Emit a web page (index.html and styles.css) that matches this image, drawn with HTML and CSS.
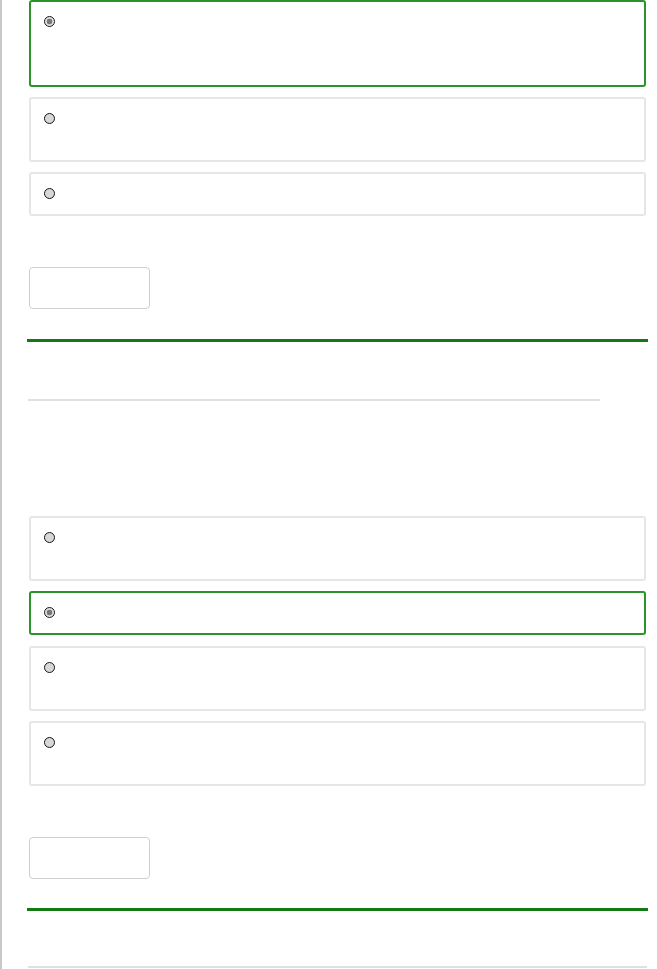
FILE: index.html
```html
<!DOCTYPE html>
<html lang="en">
<head>
<meta charset="utf-8">
<title>Quiz</title>
<link rel="stylesheet" href="styles.css">
</head>
<body>
<div class="page">
  <section class="question first">
    <div class="options">
      <label class="option selected"><span class="radio checked"></span><span class="opt-text l3"></span></label>
      <label class="option"><span class="radio"></span><span class="opt-text l2"></span></label>
      <label class="option"><span class="radio"></span><span class="opt-text"></span></label>
    </div>
    <button class="check-btn" type="button"></button>
    <div class="green-rule"></div>
  </section>
  <section class="question">
    <div class="gray-rule"></div>
    <div class="prompt"></div>
    <div class="options">
      <label class="option"><span class="radio"></span><span class="opt-text l2"></span></label>
      <label class="option selected"><span class="radio checked"></span><span class="opt-text"></span></label>
      <label class="option gap11"><span class="radio"></span><span class="opt-text l2"></span></label>
      <label class="option"><span class="radio"></span><span class="opt-text l2"></span></label>
    </div>
    <button class="check-btn" type="button"></button>
    <div class="green-rule second"></div>
    <div class="gray-rule last"></div>
  </section>
</div>
</body>
</html>
```
FILE: styles.css
```css
html, body {
  margin: 0;
  padding: 0;
  background: #ffffff;
  font-family: "Liberation Sans", Arial, sans-serif;
  font-size: 14px;
}
.page {
  border-left: 2px solid #c8c8c8;
  padding-left: 25px;
  width: 621px;
  min-height: 969px;
  box-sizing: content-box;
}
.question {
  display: flex;
  flex-direction: column;
}
.options {
  display: flex;
  flex-direction: column;
  gap: 10px;
  margin: 0 2px;
}
.option {
  display: flex;
  align-items: flex-start;
  gap: 8px;
  border: 2px solid #e6e6e6;
  border-radius: 3px;
  padding: 10px 12px 9px 13px;
  line-height: 21px;
  background: #fff;
}
.option.gap11 {
  margin-top: 1px;
}
.first .option:first-child {
  padding-bottom: 10px;
}
.option.selected {
  border-color: #2a932a;
}
.radio {
  flex: none;
  width: 9px;
  height: 9px;
  margin-top: 4px;
  border: 1.5px solid #151515;
  border-radius: 50%;
  background: #d8d8d8;
}
.radio.checked {
  background: radial-gradient(circle, #777 0 2.6px, #e2e2e2 3.2px);
}
.opt-text {
  flex: 1;
  min-height: 21px;
}
.opt-text.l2 { min-height: 42px; }
.opt-text.l3 { min-height: 63px; }
.check-btn {
  align-self: flex-start;
  margin: 51px 0 0 2px;
  width: 121px;
  height: 42px;
  border: 1px solid #cfcfcf;
  border-radius: 4px;
  background: #fff;
  padding: 0;
}
.green-rule {
  margin-top: 30px;
  height: 3px;
  background: #137a13;
}
.green-rule.second {
  margin-top: 29px;
}
.gray-rule {
  margin: 57px 0 0 1px;
  width: 572px;
  height: 2px;
  background: #e0e0e0;
}
.gray-rule.last {
  margin-top: 55px;
  width: 619px;
}
.prompt {
  height: 115px;
}
```
